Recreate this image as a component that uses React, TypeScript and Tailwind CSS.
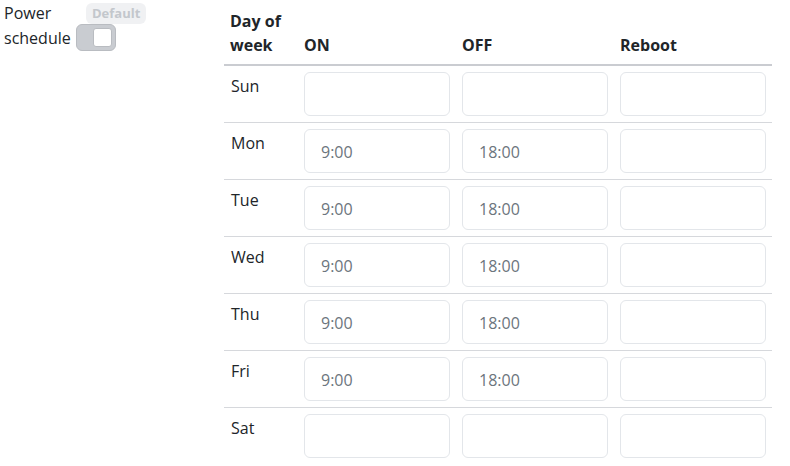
const days = [
  { d: "Sun", on: "", off: "" },
  { d: "Mon", on: "9:00", off: "18:00" },
  { d: "Tue", on: "9:00", off: "18:00" },
  { d: "Wed", on: "9:00", off: "18:00" },
  { d: "Thu", on: "9:00", off: "18:00" },
  { d: "Fri", on: "9:00", off: "18:00" },
  { d: "Sat", on: "", off: "" },
];

function Box({ value }: { value: string }) {
  return (
    <div className="h-[44px] w-full rounded-md border border-[#e3e6ea] bg-white pl-4 pt-[10px] text-[16px] leading-6 text-[#6c757d]">
      {value}
    </div>
  );
}

export default function App() {
  return (
    <div
      className="flex h-[466px] w-[790px] bg-white text-[16px] leading-6 text-[#212529]"
      style={{ fontFamily: '"Open Sans", "Noto Sans", sans-serif' }}
    >
      {/* Left label column */}
      <div className="w-[224px] shrink-0 pl-1 pt-[1px]">
        <div className="flex items-center">
          <span className="w-[82px]">Power</span>
          <span className="rounded-md bg-[#f0f1f3] px-1.5 text-[13px] font-bold leading-[21px] text-[#c3c7cc]">
            Default
          </span>
        </div>
        <div className="flex items-center">
          <span>schedule</span>
          <div className="-mt-[1px] ml-[5px] flex h-[27px] w-[40px] items-center justify-end rounded-md border border-[#b9bcc1] bg-[#c9ccd1] pr-[3px]">
            <div className="h-[19px] w-[19px] rounded-[3px] border border-[#b9bcc1] bg-white" />
          </div>
        </div>
      </div>

      {/* Schedule table */}
      <table className="h-fit w-[548px] table-fixed border-collapse">
        <thead>
          <tr className="border-b-2 border-[#caccd1] align-bottom font-bold">
            <th className="w-[74px] px-1.5 pb-[7px] pt-[9px] text-left">Day of week</th>
            <th className="w-[158px] px-1.5 pb-[7px] text-left">ON</th>
            <th className="w-[158px] px-1.5 pb-[7px] text-left">OFF</th>
            <th className="w-[158px] px-1.5 pb-[7px] text-left">Reboot</th>
          </tr>
        </thead>
        <tbody>
          {days.map((r, i) => (
            <tr key={r.d} className={i < days.length - 1 ? "border-b border-[#d6d8dc] align-top" : "align-top"}>
              <td className="px-[7px] pt-2">{r.d}</td>
              <td className="px-1.5 py-1.5">
                <Box value={r.on} />
              </td>
              <td className="px-1.5 py-1.5">
                <Box value={r.off} />
              </td>
              <td className="px-1.5 py-1.5">
                <Box value="" />
              </td>
            </tr>
          ))}
        </tbody>
      </table>
    </div>
  );
}
